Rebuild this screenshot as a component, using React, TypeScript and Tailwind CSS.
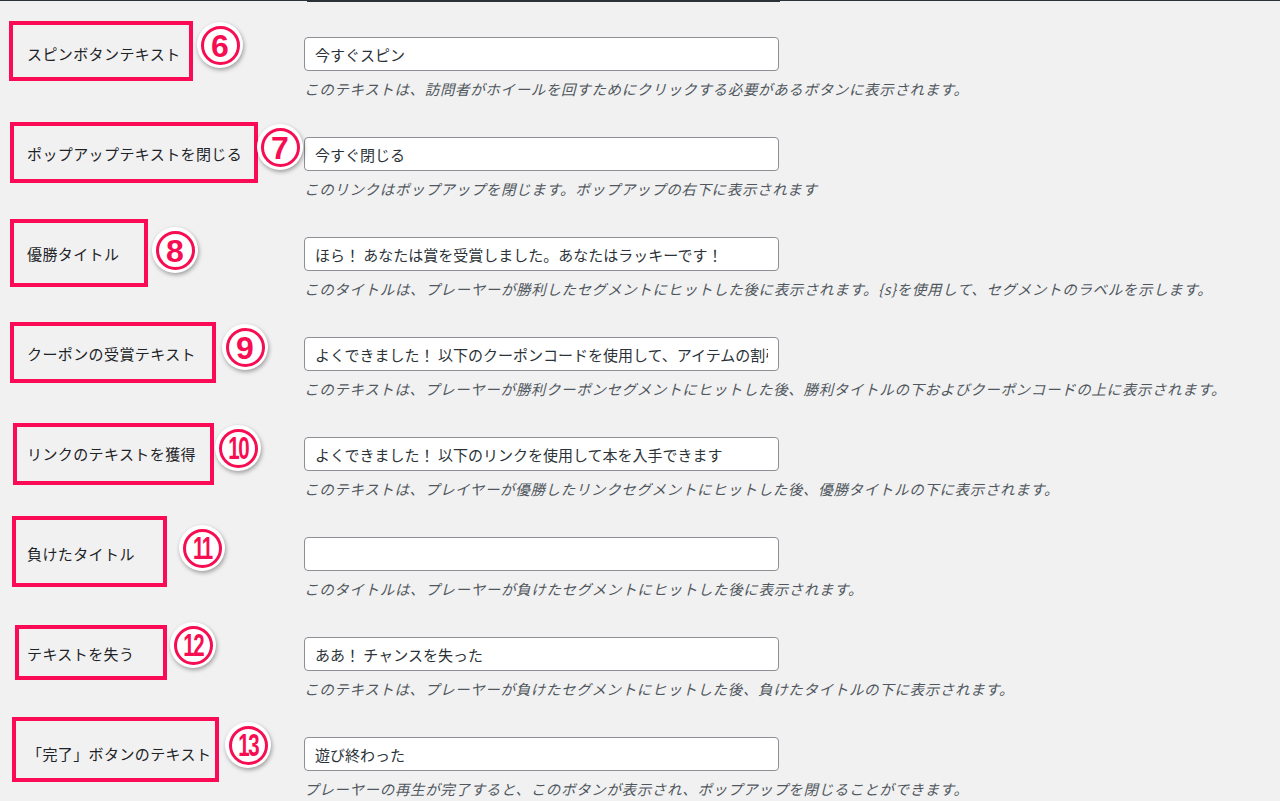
import React from "react";

type Row = {
  label: string;
  num: string;
  value: string;
  desc: string;
  box: [number, number, number, number];
  circle: [number, number];
};

const rows: Row[] = [
  {
    label: "スピンボタンテキスト",
    num: "6",
    value: "今すぐスピン",
    desc: "このテキストは、訪問者がホイールを回すためにクリックする必要があるボタンに表示されます。",
    box: [9, 21, 184, 60],
    circle: [220, 45],
  },
  {
    label: "ポップアップテキストを閉じる",
    num: "7",
    value: "今すぐ閉じる",
    desc: "このリンクはポップアップを閉じます。ポップアップの右下に表示されます",
    box: [10, 22, 248, 61],
    circle: [280, 47],
  },
  {
    label: "優勝タイトル",
    num: "8",
    value: "ほら！ あなたは賞を受賞しました。あなたはラッキーです！",
    desc: "このタイトルは、プレーヤーが勝利したセグメントにヒットした後に表示されます。{s}を使用して、セグメントのラベルを示します。",
    box: [10, 19, 138, 68],
    circle: [175, 50],
  },
  {
    label: "クーポンの受賞テキスト",
    num: "9",
    value: "よくできました！ 以下のクーポンコードを使用して、アイテムの割引を受けてください",
    desc: "このテキストは、プレーヤーが勝利クーポンセグメントにヒットした後、勝利タイトルの下およびクーポンコードの上に表示されます。",
    box: [10, 22, 206, 61],
    circle: [245, 47],
  },
  {
    label: "リンクのテキストを獲得",
    num: "10",
    value: "よくできました！ 以下のリンクを使用して本を入手できます",
    desc: "このテキストは、プレイヤーが優勝したリンクセグメントにヒットした後、優勝タイトルの下に表示されます。",
    box: [13, 23, 201, 62],
    circle: [238, 48],
  },
  {
    label: "負けたタイトル",
    num: "11",
    value: "",
    desc: "このタイトルは、プレーヤーが負けたセグメントにヒットした後に表示されます。",
    box: [12, 16, 155, 71],
    circle: [202, 48],
  },
  {
    label: "テキストを失う",
    num: "12",
    value: "ああ！ チャンスを失った",
    desc: "このテキストは、プレーヤーが負けたセグメントにヒットした後、負けたタイトルの下に表示されます。",
    box: [15, 25, 152, 55],
    circle: [193, 45],
  },
  {
    label: "「完了」ボタンのテキスト",
    num: "13",
    value: "遊び終わった",
    desc: "プレーヤーの再生が完了すると、このボタンが表示され、ポップアップを閉じることができます。",
    box: [12, 17, 207, 65],
    circle: [248, 45],
  },
];

const font = { fontFamily: '"Noto Sans CJK JP", "Noto Sans", sans-serif' };
const numFont = { fontFamily: '"Liberation Sans", Arial, sans-serif' };

function Badge({ num, x, y }: { num: string; x: number; y: number }) {
  const two = num.length > 1;
  return (
    <div
      className="absolute w-[46px] h-[46px] rounded-full bg-white shadow-[1px_2px_4px_rgba(0,0,0,0.35)] flex items-center justify-center"
      style={{ left: x - 23, top: y - 23 }}
    >
      <div className="w-[39px] h-[39px] rounded-full border-[3px] border-[#f70d52] flex items-center justify-center">
        {two ? (
          <span className="text-[31px] leading-none font-bold text-[#f70d52] scale-x-[0.66] tracking-[-2px] mt-[1px]" style={numFont}>
            {num}
          </span>
        ) : (
          <span className="text-[32px] leading-none font-bold text-[#f70d52] mt-[2px]" style={numFont}>
            {num}
          </span>
        )}
      </div>
    </div>
  );
}

export default function App() {
  return (
    <div className="w-[1280px] h-[801px] bg-[#f1f1f1] overflow-hidden relative border-t border-[#2c3338]" style={font}>
      <div className="relative z-10 ml-[307px] w-[473px] h-[1px] bg-[#2c3338]" />
      <div className="-mt-[2px]">
        {rows.map((r, i) => (
          <div key={i} className="relative h-[100px] flex">
            <div className="w-[304px] shrink-0 pl-[27px] pt-[43px]">
              <span className="text-[15px] tracking-[0.4px] leading-[22px] text-[#1d2327] block">{r.label}</span>
            </div>
            <div className="pt-[37px]">
              <input
                readOnly
                value={r.value}
                className="w-[475px] h-[34px] bg-white border border-[#8c8f94] rounded-[4px] px-[10px] text-[15px] text-[#2c3338] outline-none"
                style={font}
              />
              <p className="mt-[8px] text-[14.5px] leading-[20px] italic text-[#50575e] tracking-[0.65px] whitespace-nowrap">
                {r.desc}
              </p>
            </div>
            <div
              className="absolute border-[4px] border-[#fb0a55] pointer-events-none"
              style={{ left: r.box[0], top: r.box[1], width: r.box[2], height: r.box[3] }}
            />
            <Badge num={r.num} x={r.circle[0]} y={r.circle[1]} />
          </div>
        ))}
      </div>
    </div>
  );
}
